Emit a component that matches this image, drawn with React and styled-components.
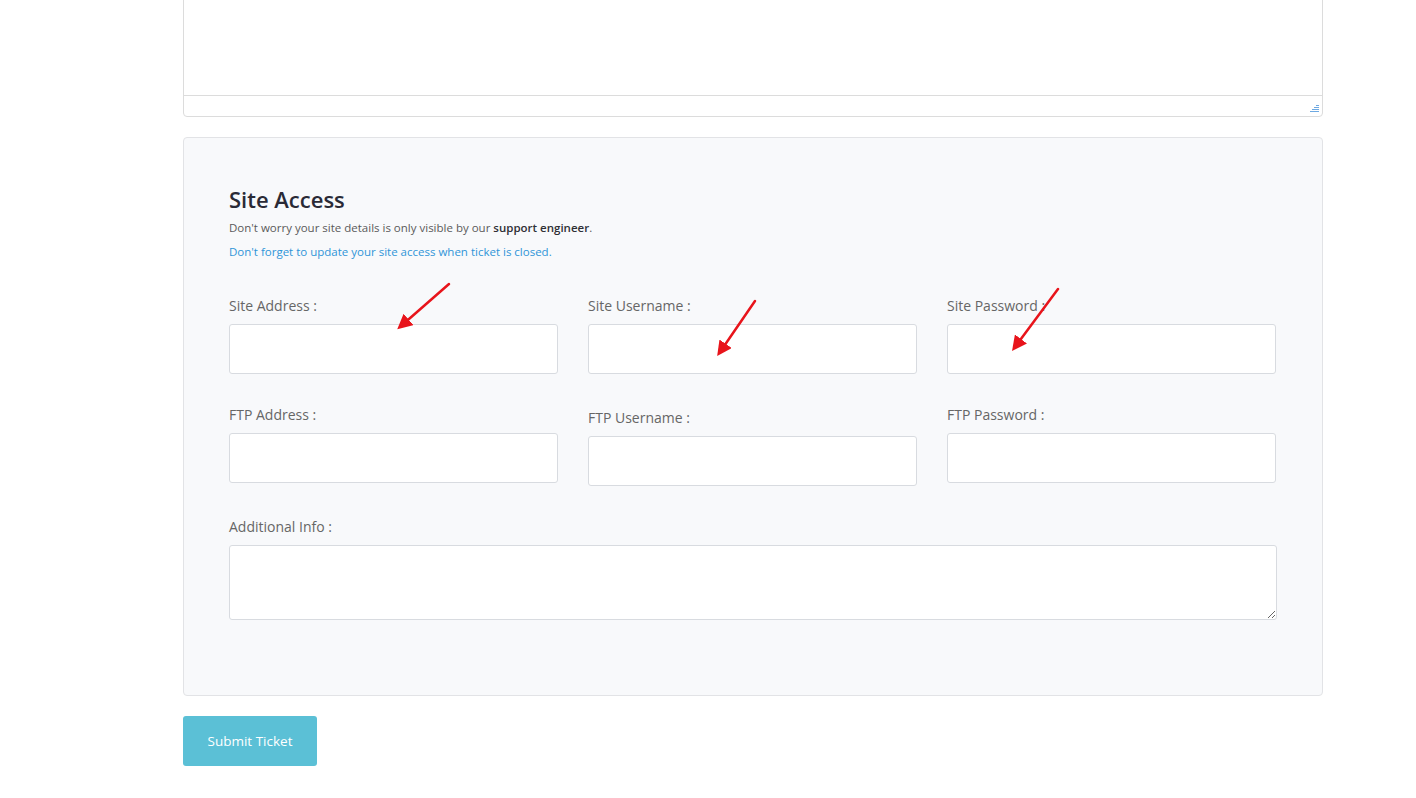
import React from 'react';
import styled, { createGlobalStyle } from 'styled-components';

const GlobalStyle = createGlobalStyle`
  html, body {
    margin: 0;
    padding: 0;
    background: #fff;
    font-family: "Open Sans", "Lato", sans-serif;
    color: #555;
  }
  * { box-sizing: border-box; }
`;

const Page = styled.div`
  position: relative;
  width: 1416px;
  height: 798px;
  overflow: hidden;
  padding: 0 94px 0 183px;
`;

const Editor = styled.div`
  margin-top: -13px;
  width: 1140px;
  border: 1px solid #dcdcdc;
  border-radius: 0 0 4px 4px;
  background: #fff;
`;

const EditorBody = styled.div`
  height: 107px;
`;

const StatusBar = styled.div`
  height: 21px;
  border-top: 1px solid #dcdcdc;
  display: flex;
  justify-content: flex-end;
  align-items: flex-end;
  padding: 0 3px 3px 0;
`;

const Card = styled.div`
  margin-top: 20px;
  width: 1140px;
  height: 559px;
  background: #f8f9fb;
  border: 1px solid #e2e3e6;
  border-radius: 4px;
  padding: 47px 45px 0 45px;
`;

const Title = styled.h3`
  margin: 0;
  font-size: 22px;
  font-weight: 600;
  color: #2a2a36;
  line-height: 28px;
`;

const Note = styled.p`
  margin: ${p => p.top || 0}px 0 0;
  font-size: 11.5px;
  line-height: 16px;
  color: ${p => (p.link ? '#2f95d8' : '#5a5a5a')};
  b { color: #2f2f35; font-weight: 600; }
`;

const Grid = styled.div`
  display: grid;
  grid-template-columns: repeat(3, 329px);
  column-gap: 30px;
  row-gap: 31px;
  margin-top: 36px;
`;

const Field = styled.div`
  display: flex;
  flex-direction: column;
  padding-top: ${p => p.shift || 0}px;
`;

const Label = styled.label`
  font-size: 14px;
  line-height: 20px;
  color: #666;
  margin-bottom: 8px;
  padding-top: 1px;
  margin-top: -1px;
`;

const Input = styled.input`
  height: 50px;
  width: 100%;
  border: 1px solid #d8dbe0;
  border-radius: 3px;
  background: #fff;
  outline: none;
  font-family: inherit;
`;

const Wide = styled.div`
  display: flex;
  flex-direction: column;
  margin-top: 31px;
  width: 1048px;
`;

const Area = styled.textarea`
  height: 75px;
  width: 100%;
  border: 1px solid #d8dbe0;
  border-radius: 3px;
  background: #fff;
  outline: none;
  resize: vertical;
  font-family: inherit;
`;

const Submit = styled.button`
  margin-top: 20px;
  width: 134px;
  height: 50px;
  border: none;
  border-radius: 3px;
  background: #5bc0d6;
  color: #fff;
  font-family: inherit;
  font-size: 13.5px;
`;

const Arrow = styled.svg`
  position: absolute;
  left: 0;
  top: 0;
  pointer-events: none;
`;

const Grip = () => (
  <svg width="9" height="9" viewBox="0 0 9 9">
    <g stroke="#6ea9e2" strokeWidth="1">
      <line x1="6" y1="1.5" x2="9" y2="1.5" />
      <line x1="4" y1="3.5" x2="9" y2="3.5" />
      <line x1="2" y1="5.5" x2="9" y2="5.5" />
      <line x1="0" y1="7.5" x2="9" y2="7.5" />
    </g>
  </svg>
);

const arrows = [
  [449, 284, 401, 326],
  [755, 301, 720, 352],
  [1058, 289, 1015, 347],
];

const fields = [
  { label: 'Site Address :' },
  { label: 'Site Username :' },
  { label: 'Site Password :' },
  { label: 'FTP Address :' },
  { label: 'FTP Username :', shift: 3 },
  { label: 'FTP Password :' },
];

export default function App() {
  return (
    <>
      <GlobalStyle />
      <Page>
        <Editor>
          <EditorBody />
          <StatusBar><Grip /></StatusBar>
        </Editor>
        <Card>
          <Title>Site Access</Title>
          <Note top={7}>Don't worry your site details is only visible by our <b>support engineer</b>.</Note>
          <Note top={8} link>Don't forget to update your site access when ticket is closed.</Note>
          <Grid>
            {fields.map(f => (
              <Field key={f.label} shift={f.shift}>
                <Label>{f.label}</Label>
                <Input />
              </Field>
            ))}
          </Grid>
          <Wide>
            <Label>Additional Info :</Label>
            <Area />
          </Wide>
        </Card>
        <Submit>Submit Ticket</Submit>
        <Arrow width="1416" height="798">
          <defs>
            <marker id="head" markerWidth="6" markerHeight="6" refX="4" refY="3" orient="auto" markerUnits="strokeWidth">
              <path d="M0,0 L6,3 L0,6 z" fill="#e8141b" />
            </marker>
          </defs>
          {arrows.map(([x1, y1, x2, y2], i) => (
            <line key={i} x1={x1} y1={y1} x2={x2} y2={y2} stroke="#e8141b" strokeWidth="2.5" strokeLinecap="round" markerEnd="url(#head)" />
          ))}
        </Arrow>
      </Page>
    </>
  );
}
